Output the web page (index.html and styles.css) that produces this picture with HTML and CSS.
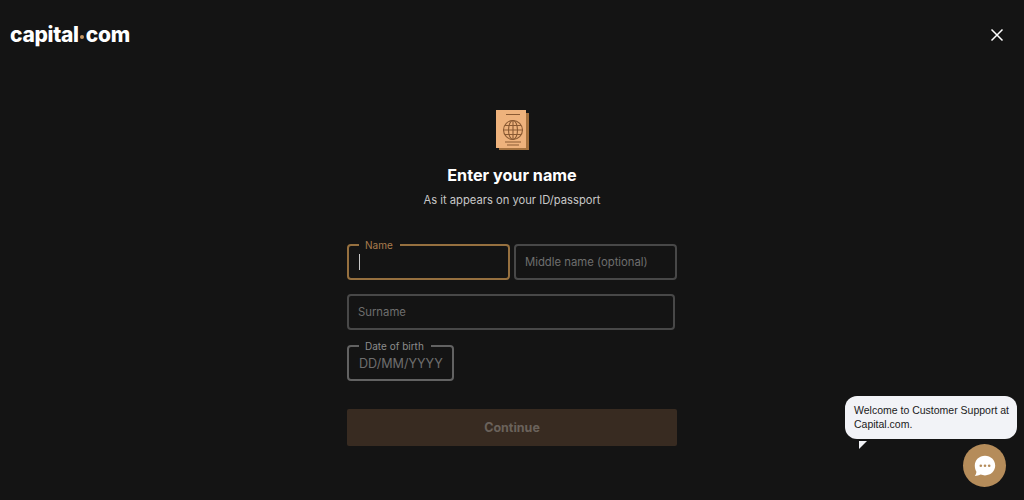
FILE: index.html
```html
<!DOCTYPE html>
<html lang="en">
<head>
<meta charset="utf-8">
<title>Enter your name</title>
<link rel="stylesheet" href="styles.css">
</head>
<body>
<div class="page">
  <header class="top">
    <div class="logo">capital<span class="logo-dot"></span>com</div>
    <button class="close" aria-label="Close">
      <svg width="14" height="14" viewBox="0 0 14 14"><path d="M1.500 1.500l11 11M12.500 1.500l-11 11" stroke="#fff" stroke-width="1.500" fill="none"/></svg>
    </button>
  </header>
  <main class="main">
    <svg class="passport" width="33" height="40" viewBox="0 0 33 40">
      <rect x="3" y="3" width="30" height="37" fill="#a5723f"/>
      <rect x="0" y="0" width="30" height="38" fill="#eeb27c"/>
      <path d="M10 4.500h14M9 32h16M11 35h12" stroke="#8a5a33" stroke-width="1.200"/>
      <g fill="none" stroke="#8a5a33" stroke-width="1.100">
        <circle cx="17" cy="20" r="9.500"/>
        <ellipse cx="17" cy="20" rx="4.500" ry="9.500"/>
        <path d="M17 10.500v19M7.500 20h19M9 15.500h16M9 24.500h16"/>
      </g>
    </svg>
    <h1 class="title">Enter your name</h1>
    <p class="sub">As it appears on your ID/passport</p>
    <form class="form">
      <div class="row">
        <div class="field field-half field-active">
          <span class="legend legend-active">Name</span>
          <span class="caret"></span>
        </div>
        <div class="field field-half"><span class="ph">Middle name (optional)</span></div>
      </div>
      <div class="row">
        <div class="field field-wide"><span class="ph">Surname</span></div>
      </div>
      <div class="row">
        <div class="field field-date">
          <span class="legend">Date of birth</span>
          <span class="ph-date">DD/MM/YYYY</span>
        </div>
      </div>
      <button type="button" class="continue">Continue</button>
    </form>
  </main>
</div>
<div class="bubble">Welcome to Customer Support at Capital.com.<span class="bubble-tail"></span></div>
<div class="chat">
  <svg width="22" height="22" viewBox="0 0 22 22">
    <path d="M11 .8c5.800 0 10.200 4.300 10.200 9.800S16.800 20.400 11 20.400c-1.500 0-3-.3-4.300-.8-1.700.9-3.700 1.300-5.900 1.300 1-1.200 1.600-2.600 1.600-4.100C1.300 15 .8 12.900.8 10.600.8 5.100 5.200.8 11 .8z" fill="#fff"/>
    <circle cx="6.800" cy="10.800" r="1.300" fill="#b58c5a"/><circle cx="11" cy="10.800" r="1.300" fill="#b58c5a"/><circle cx="15.200" cy="10.800" r="1.300" fill="#b58c5a"/>
  </svg>
</div>
</body>
</html>
```
FILE: styles.css
```css
* { box-sizing: border-box; }
html, body { margin: 0; height: 100%; }
body {
  background: #141414;
  color: #fff;
  font-family: Inter, Lato, sans-serif;
  overflow: hidden;
  position: relative;
}
.page { display: flex; flex-direction: column; height: 500px; }
.top {
  display: flex;
  justify-content: space-between;
  align-items: center;
  padding: 20px 20px 0 10px;
  height: 50px;
}
.logo {
  font-weight: 800;
  font-size: 21px;
  line-height: 28px;
  letter-spacing: -0.3px;
  color: #fff;
  display: flex;
  align-items: center;
}
.logo-dot {
  width: 4px;
  height: 4px;
  margin: 3px 1.500px 0;
  background: #c69560;
  border-radius: 50%;
}
.close {
  background: none;
  border: 0;
  padding: 0;
  width: 14px;
  height: 14px;
  display: flex;
}
.main {
  display: flex;
  flex-direction: column;
  align-items: center;
  padding-top: 60px;
}
.passport { display: block; }
.title {
  margin: 14px 0 0;
  font-size: 16.200px;
  line-height: 22px;
  font-weight: 700;
  color: #fff;
}
.sub {
  margin: 6px 0 0;
  font-size: 11.200px;
  line-height: 16px;
  color: #c8c8c8;
}
.form {
  width: 330px;
  margin-top: 36px;
  display: flex;
  flex-direction: column;
}
.row { display: flex; gap: 4px; margin-bottom: 14px; }
.row:nth-child(2) { margin-bottom: 15px; }
.row:nth-child(3) { margin-bottom: 28px; }
.field {
  position: relative;
  height: 36px;
  border: 2px solid #484848;
  border-radius: 4px;
  display: flex;
  align-items: center;
  padding-left: 9px;
}
.field-half { width: 163px; }
.field-wide { width: 328px; }
.field-date { width: 107px; border-color: #626262; padding-left: 10px; }
.field-active { border-color: #96703f; padding-left: 10px; }
.legend {
  position: absolute;
  top: -7px;
  left: 10px;
  padding: 0 7px 0 6px;
  background: #141414;
  font-size: 10px;
  line-height: 12px;
  color: #8c8c8c;
}
.legend-active { color: #a97c4e; }
.caret { width: 1px; height: 16px; background: #c8c8c8; }
.ph { font-size: 11.300px; color: #6e6e6e; }
.ph-date { font-size: 12.600px; color: #6e6e6e; }
.continue {
  width: 330px;
  height: 37px;
  border: 0;
  border-radius: 2px;
  background: #382b21;
  color: #6a625b;
  font-family: inherit;
  font-size: 12.500px;
  font-weight: 700;
}
.bubble {
  position: absolute;
  left: 845px;
  top: 396px;
  width: 172px;
  height: 43px;
  padding: 7px 5px 7px 9px;
  background: #f2f3f7;
  border-radius: 12px;
  font-family: "Liberation Sans", Arial, sans-serif;
  font-size: 10.500px;
  line-height: 14px;
  color: #1a1a1a;
}
.bubble-tail {
  position: absolute;
  left: 14px;
  top: 45px;
  width: 0;
  height: 0;
  border-top: 8px solid #f2f3f7;
  border-right: 8px solid transparent;
}
.chat {
  position: absolute;
  left: 963px;
  top: 444px;
  width: 43px;
  height: 43px;
  border-radius: 50%;
  background: #b58c5a;
  display: flex;
  align-items: center;
  justify-content: center;
}
```
